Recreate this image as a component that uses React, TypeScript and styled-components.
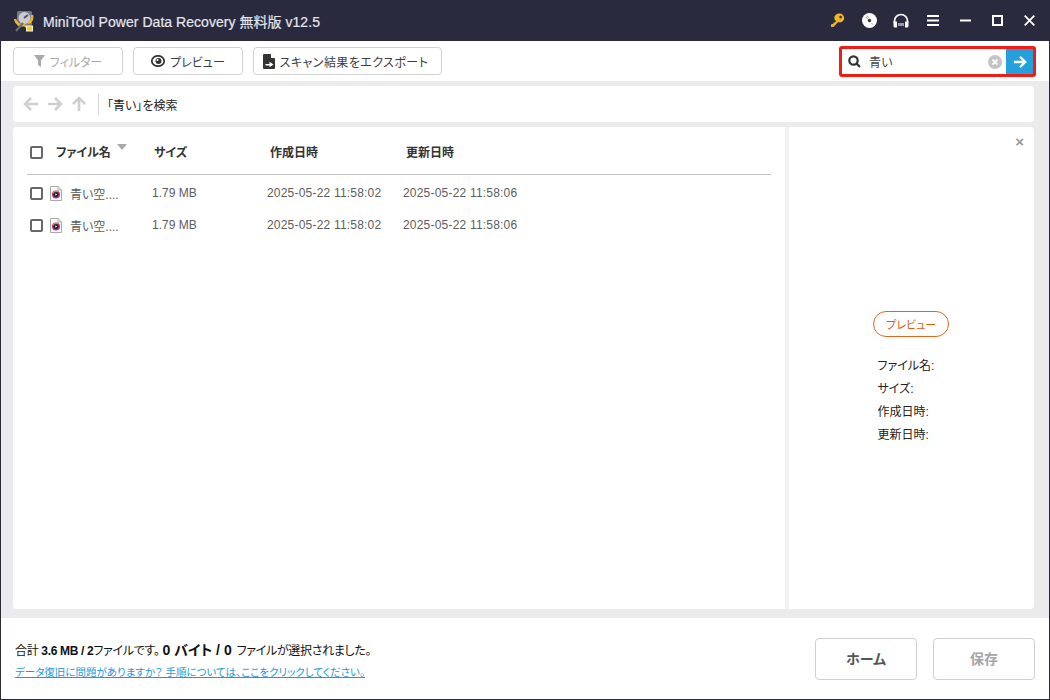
import React from "react";
import styled, { createGlobalStyle } from "styled-components";

const Global = createGlobalStyle`
  html, body { margin: 0; padding: 0; background: #fff; }
  body { font-family: "Liberation Sans", "Noto Sans CJK JP", sans-serif; }
  * { box-sizing: border-box; }
`;
const cjk = `"Liberation Sans", "Noto Sans CJK JP", sans-serif`;
const palt = `font-feature-settings: "palt";`;

const Window = styled.div`
  width: 1050px; height: 700px; display: flex; flex-direction: column;
  border: 1px solid #2a2a3e; border-top: 0; background: #ebebeb; overflow: hidden;
`;
const TitleBar = styled.header`
  height: 41px; flex: none; margin: 0 -1px; background: #2a2a3e; display: flex; align-items: center; padding: 0 0 0 14px;
`;
const Title = styled.div`
  margin-left: 9px; color: #e4e6ee; font: 14px ${cjk}; white-space: nowrap; letter-spacing: 0.04px;
  -webkit-text-stroke: 0.2px #e4e6ee;
`;
const WinIcons = styled.div`
  margin-left: auto; display: flex; align-items: center; height: 100%; padding-right: 5px;
`;
const WinIcon = styled.span`
  width: 32px; display: flex; justify-content: center; align-items: center;
`;
const Toolbar = styled.div`
  height: 40px; flex: none; background: #fff; display: flex; align-items: flex-start; padding: 6px 13px 0 12px; gap: 10px;
`;
const ToolButton = styled.button<{ $w: number; $off?: boolean; $track?: number; $endPad?: number }>`
  width: ${p => p.$w}px; height: 28px; margin: 0; padding: 0 ${p => p.$endPad ?? 0}px 0 0; background: #fff; border: 1px solid #d2d2d2; border-radius: 4px;
  display: flex; align-items: center; justify-content: center; gap: ${p => (p.$track ? 4 : 5)}px;
  color: ${p => (p.$off ? "#a9a9a9" : "#3d3d3d")}; font: 12px ${cjk}; ${palt}
  letter-spacing: ${p => p.$track ?? 0}px;
`;
const SearchBox = styled.div`
  margin-left: auto; margin-top: -1px; width: 197px; height: 31px; border: 3px solid #f01c16; border-radius: 3px;
  display: flex; align-items: center; background: #fff; padding-left: 6px;
`;
const SearchText = styled.span`
  margin-left: 8px; color: #444; font: 12px ${cjk}; flex: 1;
`;
const GoButton = styled.span`
  width: 27px; height: 25px; margin-left: 4px; background: #24a0dc; display: flex; align-items: center; justify-content: center;
`;
const Content = styled.main`
  flex: 1; display: flex; flex-direction: column; padding: 5px 15px 9px 12px; gap: 5px; min-height: 0;
`;
const PathBar = styled.div`
  height: 36px; flex: none; background: #fff; border-radius: 4px; display: flex; align-items: center; padding-left: 10px;
`;
const NavArrows = styled.div`
  display: flex; gap: 8px; align-items: center; padding-right: 11px; border-right: 1px solid #d6d6d6; height: 21px;
`;
const PathText = styled.span`
  margin-left: 8px; font: 12px ${cjk}; ${palt} color: #222;
`;
const Panels = styled.div`
  flex: 1; display: flex; min-height: 0; background: #f0f2f6; border-radius: 4px; gap: 4px;
`;
const ListPanel = styled.section`
  flex: 1; background: #fff; border-radius: 4px 0 0 4px; padding: 0 14px;
`;
const PreviewPanel = styled.aside`
  position: relative; width: 245px; flex: none; background: #fff; border-radius: 0 4px 4px 0;
  display: flex; flex-direction: column; align-items: center; padding-top: 184px;
`;
const Check = styled.span`
  display: block; width: 13px; height: 13px; border: 2px solid #676767; border-radius: 2px; background: #fff;
`;
const HeaderRow = styled.div`
  height: 48px; border-bottom: 1px solid #c4c4c4; display: grid;
  grid-template-columns: 26px 98px 116px 136px 1fr; align-items: center; padding: 1px 0 0 3px;
  font: bold 12px ${cjk}; ${palt} color: #333;
  ${Check} { margin-top: 2px; }
`;
const NameHead = styled.span`
  position: relative;
`;
const SortMark = styled.i`
  position: absolute; left: 61px; top: 1px; width: 0; height: 0; border-left: 5px solid transparent; border-right: 5px solid transparent; border-top: 6px solid #a8a8a8;
`;
const FileList = styled.div`
  padding-top: 2px;
`;
const FileRow = styled.div`
  height: 32px; display: grid; grid-template-columns: 20px 20px 82px 115px 136px 1fr; align-items: center; padding-left: 3px;
  font: 12px ${cjk}; ${palt} color: #5c5c5c;
`;
const DateCell = styled.span`
  letter-spacing: 0.2px;
`;
const Close = styled.span`
  position: absolute; top: 7px; right: 10px; color: #9a9a9a; font: bold 15px/15px "Liberation Sans", sans-serif;
`;
const PreviewButton = styled.div`
  width: 76px; height: 26px; border: 1px solid #e4661a; border-radius: 13px; color: #dd5a0c; font: 11px ${cjk}; ${palt}
  display: flex; align-items: center; justify-content: center; margin-left: -0.5px;
`;
const Meta = styled.dl`
  margin: 18px 0 0 0; width: 76px; position: relative; left: 4px; font: 12px/23px ${cjk}; ${palt} color: #222;
`;
const MetaLine = styled.dt`
  white-space: nowrap;
`;
const Footer = styled.footer`
  height: 81px; flex: none; background: #fff; display: flex; align-items: center; padding: 0 14px;
`;
const Summary = styled.div`
  display: flex; flex-direction: column; gap: 4px; margin-top: 4px;
`;
const SummaryLine = styled.div`
  font: 12px/18px ${cjk}; ${palt} color: #111; white-space: nowrap; letter-spacing: -0.33px;
`;
const Strong = styled.b`
  font-weight: bold;
`;
const Big = styled.b`
  font-size: 14px; font-weight: bold; margin: 0 2px 0 3px; letter-spacing: 0;
`;
const Help = styled.a`
  font: 10.5px/16px ${cjk}; ${palt} color: #1b9bdc; text-decoration: underline; white-space: nowrap;
`;
const FooterButtons = styled.div`
  margin-left: auto; display: flex; gap: 16px;
`;
const BigButton = styled.button<{ $off?: boolean }>`
  width: 102px; height: 42px; margin: 0; padding: 0 0 2px; background: #fff; border: 1px solid #cfcfcf; border-radius: 4px;
  font: bold 14px ${cjk}; ${palt} color: ${p => (p.$off ? "#a6a6a6" : "#555")};
`;

const Arrow = ({ dir, color = "#cfcfcf", size = 16 }: { dir: "l" | "r" | "u"; color?: string; size?: number }) => {
  const d = dir === "l" ? "M15 8H2M8 2 2 8l6 6" : dir === "r" ? "M1 8h13M8 2l6 6-6 6" : "M8 15V2M2 8l6-6 6 6";
  return (
    <svg width={size} height={size} viewBox="0 0 16 16" fill="none" stroke={color} strokeWidth="2.6">
      <path d={d} />
    </svg>
  );
};

const AppLogo = () => (
  <svg width="20" height="22" viewBox="0 0 20 22">
    <rect x="3" y="1" width="15" height="15" rx="1.5" fill="#77797f" />
    <circle cx="10.5" cy="8" r="6" fill="#c9ccd2" />
    <path d="M10 8l4-3" stroke="#55575c" strokeWidth="2" />
    <path d="M1 9c1 5 5 7 9 6l3 2M18 5c1 4-1 7-4 8" stroke="#efb51f" strokeWidth="2.4" fill="none" />
    <path d="M9 13 2 21" stroke="#6d7078" strokeWidth="2" />
    <rect x="12.500" y="16" width="6" height="5" fill="#f6ce32" stroke="#f5f0d8" />
  </svg>
);
const KeyIcon = () => (
  <svg width="15" height="15" viewBox="0 0 15 15">
    <path d="M9.8 0.6a4.4 4.4 0 0 1 0 8.8c-.6 0-1.100-.1-1.600-.3L3.400 14H1v-2.300L1.800 11h1.500l.1-1.500h1.500L6 8.300A4.400 4.400 0 0 1 9.800 .6zm.8 2.200a1.300 1.300 0 1 0 0 2.600 1.300 1.300 0 0 0 0-2.600z" fill="#f2b51d" fillRule="evenodd" />
  </svg>
);
const DiscIcon = () => (
  <svg width="15" height="15" viewBox="0 0 15 15">
    <circle cx="7.500" cy="7.500" r="7.500" fill="#fff" />
    <circle cx="7.500" cy="7.500" r="1.700" fill="#34344a" />
    <path d="M3.500 3.800l2 2M5 2.600l1.600 2" stroke="#8d8d9a" strokeWidth="1" />
    <path d="M9.500 10l1.700 1.900" stroke="#b5b5be" strokeWidth="1" />
  </svg>
);
const HeadsetIcon = () => (
  <svg width="16" height="15" viewBox="0 0 16 15">
    <path d="M1.500 10V8a6.500 6.500 0 0 1 13 0v2" fill="none" stroke="#fff" strokeWidth="1.700" />
    <path d="M0.500 8.500h3.500v6H2a1.500 1.500 0 0 1-1.500-1.500zM15.500 8.500H12v6h2a1.500 1.500 0 0 0 1.500-1.500z" fill="#fff" />
    <path d="M5 10h6v3H5z" fill="#9a9aa5" />
  </svg>
);
const MenuIcon = () => (
  <svg width="12" height="11" viewBox="0 0 12 11" fill="#fff"><rect width="12" height="2" /><rect y="4.500" width="12" height="2" /><rect y="9" width="12" height="2" /></svg>
);
const MinIcon = () => <svg width="11" height="3" viewBox="0 0 11 3"><rect width="11" height="2" y="0.500" fill="#fff" /></svg>;
const MaxIcon = () => <svg width="11" height="11" viewBox="0 0 11 11"><rect x="1" y="1" width="9" height="9" fill="none" stroke="#fff" strokeWidth="2" /></svg>;
const CloseIcon = () => <svg width="11" height="11" viewBox="0 0 11 11"><path d="M.7.7l9.600 9.600M10.300.7.700 10.300" stroke="#fff" strokeWidth="1.800" /></svg>;

const FilterIcon = () => (
  <svg width="11" height="12" viewBox="0 0 11 12"><path d="M0 0h11L7 5.500V12L4 10V5.500z" fill="#a9a9a9" /></svg>
);
const EyeIcon = () => (
  <svg width="14" height="12" viewBox="0 0 14 12">
    <ellipse cx="7" cy="6" rx="6.200" ry="5.200" fill="none" stroke="#333" strokeWidth="1.700" />
    <circle cx="7.500" cy="6" r="3" fill="#333" />
    <circle cx="6.500" cy="5" r="1.100" fill="#fff" />
  </svg>
);
const ExportIcon = () => (
  <svg width="13" height="15" viewBox="0 0 13 15">
    <path d="M0 1a1 1 0 0 1 1-1h6.500L12 4.500V14a1 1 0 0 1-1 1H1a1 1 0 0 1-1-1z" fill="#333" />
    <path d="M8 0v4h4z" fill="#fff" />
    <path d="M2.500 10h4V7.800L10.500 10.500 6.500 13.200V11.500h-4z" fill="#fff" />
  </svg>
);
const SearchIcon = () => (
  <svg width="13" height="13" viewBox="0 0 13 13" fill="none" stroke="#333" strokeWidth="2.200">
    <circle cx="5.500" cy="5.500" r="4.200" /><path d="M8.500 8.500 12 12" />
  </svg>
);
const ClearIcon = () => (
  <svg width="14" height="14" viewBox="0 0 14 14">
    <circle cx="7" cy="7" r="7" fill="#c4c4c4" /><path d="M4.500 4.500l5 5M9.500 4.500l-5 5" stroke="#fff" strokeWidth="1.800" />
  </svg>
);
const MediaIcon = () => (
  <svg width="12" height="15" viewBox="0 0 12 15">
    <path d="M.5.500h7.500l3.500 3.500v10.500H.5z" fill="#fff" stroke="#a9a9a9" />
    <path d="M8 .5V4h3.500" fill="none" stroke="#a9a9a9" />
    <circle cx="6" cy="8.500" r="4" fill="#b5318a" />
    <path d="M2.500 7a4 4 0 0 1 6-1.800L6 8.500z" fill="#f08a1d" />
    <circle cx="6" cy="8.500" r="2.500" fill="#1c1c1c" />
    <path d="M5.300 7.300 7.300 8.500 5.300 9.700z" fill="#fff" />
  </svg>
);

const files = [
  { name: "青い空....", size: "1.79 MB", created: "2025-05-22 11:58:02", modified: "2025-05-22 11:58:06" },
  { name: "青い空....", size: "1.79 MB", created: "2025-05-22 11:58:02", modified: "2025-05-22 11:58:06" },
];

export default function App() {
  return (
    <>
      <Global />
      <Window>
        <TitleBar>
          <AppLogo />
          <Title>MiniTool Power Data Recovery 無料版 v12.5</Title>
          <WinIcons>
            <WinIcon><KeyIcon /></WinIcon>
            <WinIcon><DiscIcon /></WinIcon>
            <WinIcon><HeadsetIcon /></WinIcon>
            <WinIcon><MenuIcon /></WinIcon>
            <WinIcon><MinIcon /></WinIcon>
            <WinIcon><MaxIcon /></WinIcon>
            <WinIcon><CloseIcon /></WinIcon>
          </WinIcons>
        </TitleBar>
        <Toolbar>
          <ToolButton $w={110} $off><FilterIcon />フィルター</ToolButton>
          <ToolButton $w={110}><EyeIcon />プレビュー</ToolButton>
          <ToolButton $w={189} $track={0.45} $endPad={4}><ExportIcon />スキャン結果をエクスポート</ToolButton>
          <SearchBox>
            <SearchIcon />
            <SearchText>青い</SearchText>
            <ClearIcon />
            <GoButton><Arrow dir="r" color="#fff" size={14} /></GoButton>
          </SearchBox>
        </Toolbar>
        <Content>
          <PathBar>
            <NavArrows>
              <Arrow dir="l" /><Arrow dir="r" /><Arrow dir="u" />
            </NavArrows>
            <PathText>「青い」を検索</PathText>
          </PathBar>
          <Panels>
            <ListPanel>
              <HeaderRow>
                <Check />
                <NameHead>ファイル名<SortMark /></NameHead>
                <span>サイズ</span>
                <span>作成日時</span>
                <span>更新日時</span>
              </HeaderRow>
              <FileList>
                {files.map((f, i) => (
                  <FileRow key={i}>
                    <Check />
                    <MediaIcon />
                    <span>{f.name}</span>
                    <span>{f.size}</span>
                    <DateCell>{f.created}</DateCell>
                    <DateCell>{f.modified}</DateCell>
                  </FileRow>
                ))}
              </FileList>
            </ListPanel>
            <PreviewPanel>
              <Close>×</Close>
              <PreviewButton>プレビュー</PreviewButton>
              <Meta>
                <MetaLine>ファイル名:</MetaLine>
                <MetaLine>サイズ:</MetaLine>
                <MetaLine>作成日時:</MetaLine>
                <MetaLine>更新日時:</MetaLine>
              </Meta>
            </PreviewPanel>
          </Panels>
        </Content>
        <Footer>
          <Summary>
            <SummaryLine>
              合計 <Strong>3.6 MB / 2</Strong>ファイルです。<Big>0 バイト / 0</Big> ファイルが選択されました。
            </SummaryLine>
            <Help>データ復旧に問題がありますか？ 手順については、ここをクリックしてください。</Help>
          </Summary>
          <FooterButtons>
            <BigButton>ホーム</BigButton>
            <BigButton $off>保存</BigButton>
          </FooterButtons>
        </Footer>
      </Window>
    </>
  );
}
